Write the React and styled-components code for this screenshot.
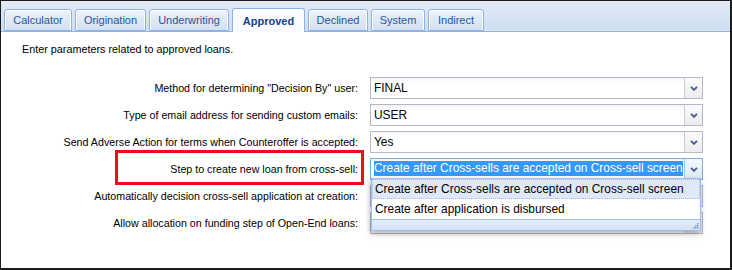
import React from 'react';
import styled, { createGlobalStyle } from 'styled-components';

const GlobalStyle = createGlobalStyle`
  html, body {
    margin: 0;
    padding: 0;
    background: #fff;
  }
  body {
    font-family: "Liberation Sans", Arial, sans-serif;
  }
`;

const Frame = styled.div`
  width: 732px;
  height: 270px;
  box-sizing: border-box;
  border: 1px solid #1b1b1b;
  border-right-width: 2px;
  border-bottom-width: 2px;
  background: #fff;
  display: flex;
  flex-direction: column;
  overflow: hidden;
`;

const TabStrip = styled.div`
  height: 30px;
  flex: none;
  display: flex;
  align-items: flex-end;
  gap: 3px;
  padding-left: 3px;
  border-bottom: 1px solid #8db2e3;
  box-shadow: inset 0 -1px 0 #dae6f4;
  background: linear-gradient(to bottom, #e3ebf7 0%, #d6e3f3 60%, #cedcf0 100%);
`;

const Tab = styled.div`
  width: ${(p) => p.$width}px;
  height: ${(p) => (p.$active ? '24px' : '22px')};
  margin-bottom: ${(p) => (p.$active ? '-1px' : '0')};
  box-sizing: border-box;
  display: flex;
  align-items: center;
  justify-content: center;
  font-size: 11px;
  font-weight: ${(p) => (p.$active ? 'bold' : 'normal')};
  color: ${(p) => (p.$active ? '#15428b' : '#2a5596')};
  border: 1px solid #8db2e3;
  border-bottom: ${(p) => (p.$active ? 'none' : '1px solid #8db2e3')};
  border-radius: 3px 3px 0 0;
  box-shadow: inset 1px 1px 0 #fff, inset -1px 0 0 #fff;
  background: ${(p) =>
    p.$active
      ? 'linear-gradient(to bottom, #ffffff 0%, #f7faff 100%)'
      : 'linear-gradient(to bottom, #eef3fb 0%, #dde7f5 55%, #d3e0f2 100%)'};
  white-space: nowrap;
  cursor: default;
`;

const Body = styled.div`
  flex: 1;
  padding: 10px 0 0 21px;
  position: relative;
`;

const Intro = styled.div`
  font-size: 10.8px;
  line-height: 14px;
  color: #000;
`;

const Form = styled.div`
  margin-top: 21px;
  display: grid;
  grid-template-columns: 336px 333px;
  column-gap: 12px;
  row-gap: 5px;
  grid-auto-rows: 22px;
`;

const Label = styled.div`
  position: relative;
  font-size: 10.7px;
  line-height: 22px;
  text-align: right;
  color: #000;
  white-space: nowrap;
`;

const Highlight = styled.span`
  position: absolute;
  left: 93px;
  right: -6px;
  top: -8px;
  bottom: -5px;
  border: 3px solid #e8101a;
  pointer-events: none;
`;

const Combo = styled.div`
  position: relative;
  display: flex;
  box-sizing: border-box;
  height: 22px;
  border: 1px solid ${(p) => (p.$focused ? '#7eadd9' : '#b5b8c8')};
  background: linear-gradient(to bottom, #f3f3f3 0px, #fff 4px, #fff 100%);
  z-index: ${(p) => (p.$open ? 5 : 1)};
`;

const ComboText = styled.div`
  flex: 1;
  min-width: 0;
  padding: 0 2px 0 3px;
  font-size: 11.9px;
  line-height: 20px;
  color: #000;
  white-space: nowrap;
  overflow: hidden;
`;

const Selected = styled.span`
  background: #3399ff;
  color: #fff;
  display: inline-block;
  line-height: 15px;
  vertical-align: middle;
  margin-top: -2px;
`;

const Trigger = styled.div`
  width: 17px;
  flex: none;
  display: flex;
  align-items: center;
  justify-content: center;
  border-left: 1px solid ${(p) => (p.$focused ? '#a9c4e6' : '#c9cbd6')};
  background: ${(p) =>
    p.$focused
      ? 'linear-gradient(to bottom, #f4f8fd 0%, #dfe8f4 100%)'
      : 'linear-gradient(to bottom, #fbfbfb 0%, #ececec 100%)'};
`;

const DropList = styled.div`
  position: absolute;
  top: 100%;
  left: 0;
  right: 1px;
  margin-top: -1px;
  box-sizing: border-box;
  background: #fff;
  border: 1px solid #98c0f4;
  box-shadow: 0 3px 6px rgba(0, 0, 0, 0.22), -2px 2px 4px rgba(0, 0, 0, 0.1);
`;

const DropItem = styled.div`
  height: 20px;
  box-sizing: border-box;
  padding-left: 2px;
  font-size: 11.9px;
  line-height: 18px;
  color: #000;
  white-space: nowrap;
  border: 1px dotted ${(p) => (p.$selected ? '#a3bae9' : 'transparent')};
  background: ${(p) => (p.$selected ? '#dfe8f6' : '#fff')};
`;

const DropFooter = styled.div`
  height: 10px;
  border-top: 1px solid #98c0f4;
  background: linear-gradient(to bottom, #e4ecf8 0%, #d5e2f4 100%);
  display: flex;
  justify-content: flex-end;
  align-items: flex-end;
`;

const Chevron = () => (
  <svg width="8" height="5" viewBox="0 0 8 5">
    <polyline points="1,0.8 4,3.8 7,0.8" fill="none" stroke="#3e5f92" strokeWidth="1.9" />
  </svg>
);

const Grip = () => (
  <svg width="7" height="7" viewBox="0 0 7 7" style={{ marginRight: 1, marginBottom: 1 }}>
    <rect x="5" y="1" width="1.5" height="1.5" fill="#7d9cc8" />
    <rect x="3" y="3" width="1.5" height="1.5" fill="#7d9cc8" />
    <rect x="5" y="3" width="1.5" height="1.5" fill="#7d9cc8" />
    <rect x="1" y="5" width="1.5" height="1.5" fill="#7d9cc8" />
    <rect x="3" y="5" width="1.5" height="1.5" fill="#7d9cc8" />
    <rect x="5" y="5" width="1.5" height="1.5" fill="#7d9cc8" />
  </svg>
);

const tabs = [
  { name: 'Calculator', width: 68 },
  { name: 'Origination', width: 71 },
  { name: 'Underwriting', width: 80 },
  { name: 'Approved', width: 73 },
  { name: 'Declined', width: 60 },
  { name: 'System', width: 54 },
  { name: 'Indirect', width: 56 },
];

const crossSellOptions = [
  'Create after Cross-sells are accepted on Cross-sell screen',
  'Create after application is disbursed',
];

const rows = [
  { label: 'Method for determining "Decision By" user:', value: 'FINAL' },
  { label: 'Type of email address for sending custom emails:', value: 'USER' },
  { label: 'Send Adverse Action for terms when Counteroffer is accepted:', value: 'Yes' },
  { label: 'Step to create new loan from cross-sell:', value: crossSellOptions[0], open: true },
  { label: 'Automatically decision cross-sell application at creation:', value: '' },
  { label: 'Allow allocation on funding step of Open-End loans:', value: '' },
];

export default function App() {
  return (
    <>
      <GlobalStyle />
      <Frame>
        <TabStrip>
          {tabs.map((t) => (
            <Tab key={t.name} $width={t.width} $active={t.name === 'Approved'}>
              {t.name}
            </Tab>
          ))}
        </TabStrip>
        <Body>
          <Intro>Enter parameters related to approved loans.</Intro>
          <Form>
            {rows.map((r) => (
              <React.Fragment key={r.label}>
                <Label>
                  {r.label}
                  {r.open && <Highlight />}
                </Label>
                <Combo $focused={r.open} $open={r.open}>
                  <ComboText>{r.open ? <Selected>{r.value}</Selected> : r.value}</ComboText>
                  <Trigger $focused={r.open}>
                    <Chevron />
                  </Trigger>
                  {r.open && (
                    <DropList>
                      {crossSellOptions.map((o, i) => (
                        <DropItem key={o} $selected={i === 0}>
                          {o}
                        </DropItem>
                      ))}
                      <DropFooter>
                        <Grip />
                      </DropFooter>
                    </DropList>
                  )}
                </Combo>
              </React.Fragment>
            ))}
          </Form>
        </Body>
      </Frame>
    </>
  );
}
